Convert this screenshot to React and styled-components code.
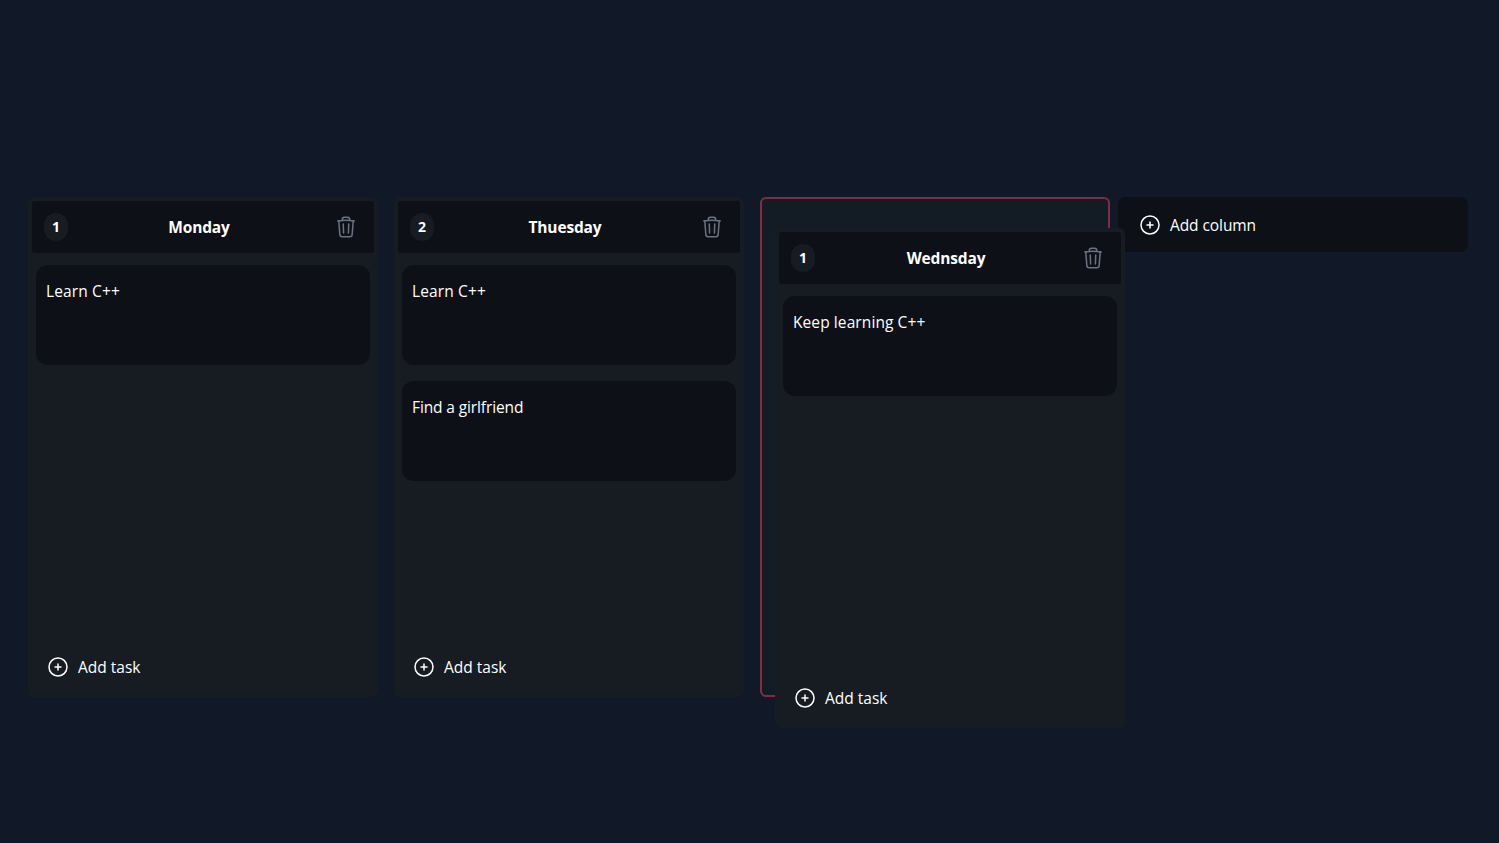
import React from "react";
import styled, { createGlobalStyle } from "styled-components";

const GlobalStyle = createGlobalStyle`
  *, *::before, *::after { box-sizing: border-box; }
  body {
    margin: 0;
    background: #111827;
    color: #fff;
    font-family: "Open Sans", "Noto Sans", sans-serif;
    font-size: 16px;
    line-height: 24px;
  }
  button { font: inherit; color: inherit; background: none; border: 0; margin: 0; padding: 0; }
`;

const Page = styled.main`
  height: 843px;
  overflow: hidden;
  padding: 197px 28px 0;
`;

const Board = styled.div`
  display: flex;
  align-items: flex-start;
  gap: 8px;
`;

const Columns = styled.div`
  display: flex;
  gap: 16px;
`;

const ColumnBox = styled.section`
  display: flex;
  flex-direction: column;
  width: 350px;
  height: 500px;
  border-radius: 6px;
  background: #161c22;
`;

const Slot = styled.div`
  position: relative;
  width: 350px;
  height: 500px;
  border: 2px solid #842b43;
  border-radius: 6px;
  background: #131b25;
`;

const DragLayer = styled.div`
  position: absolute;
  z-index: 1;
  left: 13px;
  top: 29px;
`;

const Header = styled.header`
  display: flex;
  align-items: center;
  justify-content: space-between;
  height: 52px;
  margin: 4px 4px;
  padding: 12px;
  border-radius: 3px;
  background: #0d1117;
`;

const Count = styled.span`
  display: flex;
  align-items: center;
  justify-content: center;
  width: 24px;
  height: 28px;
  border-radius: 12px;
  background: #161c22;
  font-size: 14px;
  font-weight: 700;
`;

const Title = styled.h2`
  margin: 0;
  font-size: 15.5px;
  font-weight: 700;
  letter-spacing: -0.15px;
`;

const DeleteButton = styled.button`
  display: flex;
  padding: 4px;
  color: #6b7280;
`;

const Tasks = styled.div`
  display: flex;
  flex: 1;
  flex-direction: column;
  gap: 16px;
  padding: 8px;
  padding-top: 8px;
`;

const Task = styled.article`
  height: 100px;
  padding: 14px 10px;
  border-radius: 12px;
  background: #0d1117;
`;

const Label = styled.span`
  font-size: 15.5px;
  letter-spacing: ${(p) => p.$tracking || 0}px;
`;

const AddTask = styled.button`
  display: flex;
  align-items: center;
  gap: 8px;
  height: 60px;
  padding: 0 18px;
`;

const AddColumn = styled.button`
  display: flex;
  align-items: center;
  gap: 8px;
  width: 350px;
  height: 55px;
  padding: 0 20px;
  border-radius: 8px;
  background: #0d1117;
`;

const Icon = styled.svg`
  width: 24px;
  height: 24px;
  flex: none;
  fill: none;
  stroke: currentColor;
  stroke-width: 1.5;
  stroke-linecap: round;
  stroke-linejoin: round;
`;

const PlusIcon = () => (
  <Icon viewBox="0 0 24 24">
    <path d="M12 9v6m3-3H9m12 0a9 9 0 1 1-18 0 9 9 0 0 1 18 0Z" />
  </Icon>
);

const TrashIcon = () => (
  <Icon viewBox="0 0 24 24">
    <path d="m14.74 9-.346 9m-4.788 0L9.26 9m9.968-3.21c.342.052.682.107 1.022.166m-1.022-.165L18.16 19.673a2.25 2.25 0 0 1-2.244 2.077H8.084a2.25 2.25 0 0 1-2.244-2.077L4.772 5.79m14.456 0a48.108 48.108 0 0 0-3.478-.397m-12 .562c.34-.059.68-.114 1.022-.165m0 0a48.11 48.11 0 0 1 3.478-.397m7.5 0v-.916c0-1.18-.91-2.164-2.09-2.201a51.964 51.964 0 0 0-3.32 0c-1.18.037-2.09 1.022-2.09 2.201v.916m7.5 0a48.667 48.667 0 0 0-7.5 0" />
  </Icon>
);

function Column({ title, tasks }) {
  return (
    <ColumnBox>
      <Header>
        <Count>{tasks.length}</Count>
        <Title>{title}</Title>
        <DeleteButton aria-label="Delete column"><TrashIcon /></DeleteButton>
      </Header>
      <Tasks>
        {tasks.map((task) => (
          <Task key={task.text}><Label $tracking={task.tracking}>{task.text}</Label></Task>
        ))}
      </Tasks>
      <AddTask><PlusIcon /><Label>Add task</Label></AddTask>
    </ColumnBox>
  );
}

const learn = { text: "Learn C++", tracking: 0.14 };
const girlfriend = { text: "Find a girlfriend", tracking: -0.12 };
const keepLearning = { text: "Keep learning C++", tracking: 0.09 };

export default function App() {
  return (
    <Page>
      <GlobalStyle />
      <Board>
        <Columns>
          <Column title="Monday" tasks={[learn]} />
          <Column title="Thuesday" tasks={[learn, girlfriend]} />
          <Slot>
            <DragLayer>
              <Column title="Wednsday" tasks={[keepLearning]} />
            </DragLayer>
          </Slot>
        </Columns>
        <AddColumn><PlusIcon /><Label $tracking={-0.08}>Add column</Label></AddColumn>
      </Board>
    </Page>
  );
}
